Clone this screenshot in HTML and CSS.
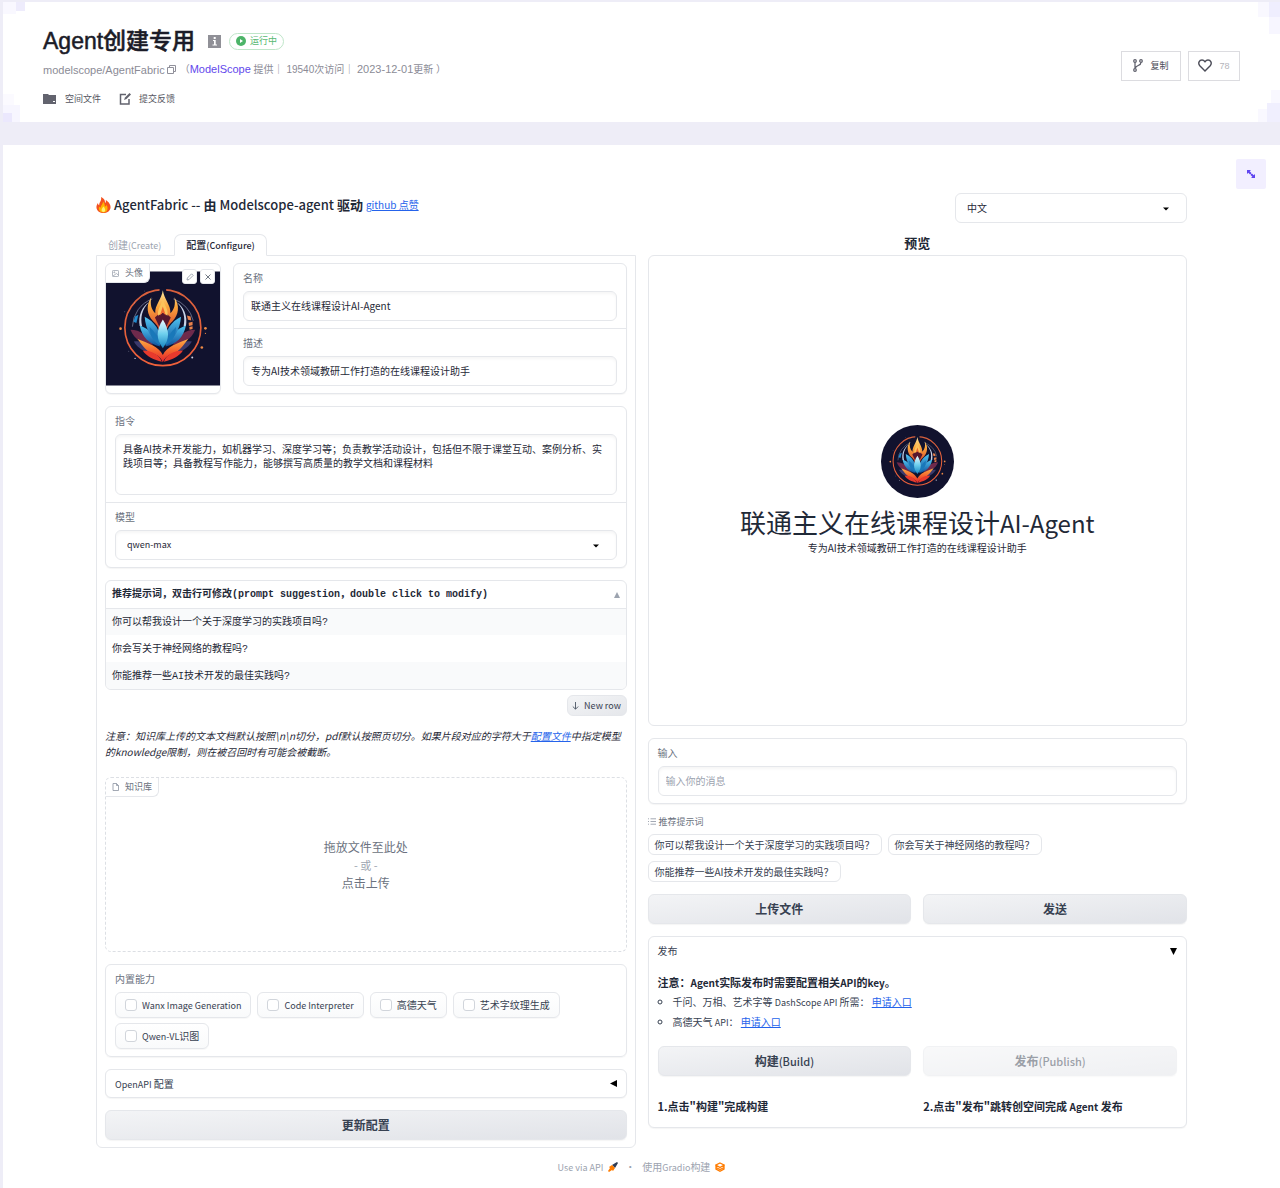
FILE: index.html
```html
<!DOCTYPE html>
<html lang="zh-CN">
<head>
<meta charset="utf-8">
<meta name="viewport" content="width=device-width, initial-scale=1">
<title>Agent创建专用</title>
<link rel="stylesheet" href="styles.css">
</head>
<body>
<svg class="defs" aria-hidden="true">
  <defs>
    <linearGradient id="ring" x1="0" y1="0" x2="0" y2="1"><stop offset="0" stop-color="#d8603c"/><stop offset="1" stop-color="#f0603a"/></linearGradient>
    <linearGradient id="fire" x1="0" y1="0" x2="0" y2="1"><stop offset="0" stop-color="#ffe9a0"/><stop offset=".4" stop-color="#fba63c"/><stop offset="1" stop-color="#d8402c"/></linearGradient>
    <linearGradient id="wing" x1="0" y1="0" x2="0" y2="1"><stop offset="0" stop-color="#fbb045"/><stop offset=".5" stop-color="#f4652e"/><stop offset="1" stop-color="#e3202c"/></linearGradient>
    <linearGradient id="ice" x1="0" y1="0" x2="0" y2="1"><stop offset="0" stop-color="#effaff"/><stop offset=".5" stop-color="#6fd0ee"/><stop offset="1" stop-color="#1583be"/></linearGradient>
    <linearGradient id="blue" x1="0" y1="0" x2="0" y2="1"><stop offset="0" stop-color="#52c5f2"/><stop offset="1" stop-color="#0d4f9a"/></linearGradient>
    <symbol id="emblem" viewBox="-12 27 345 345">
      <rect x="-12" y="27" width="345" height="345" fill="#11122e"/>
      <circle cx="160" cy="197" r="115" fill="none" stroke="url(#ring)" stroke-width="5"/>
      <path d="M150 76h20v12h-20z" fill="#11122e"/>
      <path d="M68 194a92 92 0 0 1 60-84M252 176a92 92 0 0 0-60-66" fill="none" stroke="#8d93ae" stroke-width="2"/>
      <path d="M90 192C84 160 98 132 118 120C96 142 92 166 97 192ZM230 192C236 160 222 132 202 120C224 142 228 166 223 192Z" fill="#c8d2e6"/>
      <path d="M76 163l10-5-6 25-9-4z" fill="#238bcf"/>
      <path d="M233 160l11 3 2 12-10-2zM238 182l12-3v11l-11 2zM240 195l10-2v8l-9 2z" fill="#e8814b"/>
      <path d="M62 203C92 203 116 222 130 249C100 246 74 234 62 203ZM258 203C228 203 204 222 190 249C220 246 246 234 258 203Z" fill="#6e2a4c"/>
      <path d="M72 239C98 234 125 248 138 272C108 274 86 262 72 239ZM248 239C222 234 195 248 182 272C212 274 234 262 248 239Z" fill="#3c3a6c"/>
      <path d="M160 84C164 112 184 128 183 153C195 142 199 126 195 105C212 130 208 158 190 177C179 188 173 195 171 207L160 178L149 207C147 195 141 188 130 177C112 158 108 130 125 105C121 126 125 142 137 153C136 128 156 112 160 84Z" fill="url(#fire)"/>
      <path d="M160 144L184 166L160 216L136 166Z" fill="#58172d"/>
      <path d="M160 106C163 130 178 140 174 161L160 151L146 161C142 140 157 130 160 106Z" fill="#fbc35b"/>
      <path d="M160 133L169 160L160 151L151 160Z" fill="#f0662e"/>
      <path d="M90 190C119 202 143 224 152 254C121 249 96 226 90 190ZM230 190C201 202 177 224 168 254C199 249 224 226 230 190Z" fill="url(#blue)"/>
      <path d="M105 164C134 178 155 206 155 247C126 233 108 204 105 164ZM215 164C186 178 165 206 165 247C194 233 212 204 215 164Z" fill="url(#blue)"/>
      <path d="M120 195C137 211 148 229 153 251C132 242 121 221 120 195ZM200 195C183 211 172 229 167 251C188 242 199 221 200 195Z" fill="#1978b9"/>
      <path d="M160 172C181 206 181 231 160 259C139 231 139 206 160 172Z" fill="url(#ice)"/>
      <path d="M83 231C115 244 148 253 160 280C172 253 205 244 237 231C219 252 211 270 188 276C173 281 165 290 160 302C155 290 147 281 132 276C109 270 101 252 83 231Z" fill="url(#wing)"/>
      <path d="M99 266C127 267 148 277 157 300C133 294 111 285 99 266ZM221 266C193 267 172 277 163 300C187 294 209 285 221 266Z" fill="#e83a2d"/>
      <g fill="#ef8a45"><circle cx="32" cy="200" r="4"/><circle cx="289" cy="199" r="4"/><circle cx="289" cy="214" r="2"/><circle cx="278" cy="257" r="4"/></g>
      <g fill="#cdd1e4"><circle cx="249" cy="287" r="3"/><circle cx="76" cy="290" r="2"/><circle cx="57" cy="268" r="1"/><circle cx="45" cy="149" r="1"/><circle cx="75" cy="122" r="1"/><circle cx="105" cy="86" r="1"/></g>
    </symbol>
  </defs>
</svg>

<header class="space">
  <div class="space-info">
    <div class="space-title">
      <h1>Agent创建专用</h1>
      <svg class="info-icon" width="13" height="13" viewBox="0 0 13 13"><path fill="#909097" d="M0 0h13v13H0z"/><path fill="#fff" d="M5.700 2h2v2h-2zM5 5h2.700v4.500H9v1H4.500v-1h1.500V6H5z"/></svg>
      <span class="status"><svg width="10" height="10" viewBox="0 0 10 10"><circle cx="5" cy="5" r="5" fill="#4cb468"/><path d="M4 3l3 2-3 2z" fill="#fff"/></svg>运行中</span>
    </div>
    <div class="space-meta">
      <span>modelscope/AgentFabric</span>
      <svg class="copy" width="9" height="9" viewBox="0 0 9 9" fill="none" stroke="#90909a"><path d="M.5 2.500h6v6h-6zM2.500 2V.5h6v6H7"/></svg>
      <span class="provider">（<a href="#modelscope">ModelScope</a> 提供｜ 19540次访问｜ <time>2023-12-01</time>更新 ）</span>
    </div>
    <nav class="space-links">
      <a href="#files"><svg width="14" height="10" viewBox="0 0 14 10"><path fill="#62636e" d="M0 0h5l1 1h7v9H0z"/><path fill="#fff" d="M10 7h2v1h-2z"/></svg>空间文件</a>
      <a href="#feedback"><svg width="12" height="12" viewBox="0 0 12 12" fill="none" stroke="#62636e" stroke-width="1.500"><path d="M7 1.500H1.500V11H10V6"/><path d="M5 7l1-2.500L10.500 0 12 1.500 7.500 6z" fill="#62636e" stroke="none"/></svg>提交反馈</a>
    </nav>
  </div>
  <div class="space-actions">
    <button type="button" class="outline"><svg width="10" height="13" viewBox="0 0 10 13" fill="none" stroke="#5b5c68" stroke-width="1.200"><circle cx="2" cy="2" r="1.300"/><circle cx="8" cy="2" r="1.300"/><circle cx="2" cy="11" r="1.300"/><path d="M2 3.500v6M8 3.500C8 7 3 6 2.500 9"/></svg>复制</button>
    <button type="button" class="outline like" aria-label="喜欢 78"><svg width="14" height="13" viewBox="0 0 14 13" fill="none" stroke="#4b4c57" stroke-width="1.400"><path d="M7 12L1.800 6.800C-.5 4 1.500 1 4 1c1.500 0 2.300.8 3 1.700C7.700 1.800 8.500 1 10 1c2.500 0 4.500 3 2.200 5.800z"/></svg>78</button>
  </div>
</header>

<main class="app">
  <button type="button" class="expand" aria-label="全屏"><svg width="10" height="10" viewBox="0 0 10 10" fill="#5f45f0"><path d="M1 1h4L3.700 2.300l4 4L9 5v4H5l1.300-1.300-4-4L1 5z"/><path d="M4.200 5.800l1.600-1.600" stroke="#f2efff" stroke-width=".8"/></svg></button>

  <div class="top-row">
    <h2><svg width="15" height="16" viewBox="0 0 15 16"><path fill="#f4511e" d="M5 0c4 2 4 4 4 6 1-.5 1-2 .7-3C13 5 15 8 14.500 11c-.5 3-3.500 5-7 5s-6.500-2-7-5C.2 9 1 7 2 6c0 1.200.5 2 1.200 2.300C3 5 6 4 5 0z"/><path fill="#ffb300" d="M7 4.500c2.500 2.500 1 4 2.500 5 .7-.5.800-1 .8-1.800 2.200 2.500 1.700 7.800-2.800 7.800-4 0-5.500-3.500-4.300-6 .5 1 1 1.200 1.600 1C4.800 8 7 7.500 7 4.500z"/><path fill="#fff176" d="M7.500 9.500c2 2 2.500 5.500 0 5.500s-2.500-3 0-5.500z"/></svg> <span class="brand"><span class="en">AgentFabric --</span> 由 <span class="en">Modelscope-agent</span> 驱动</span> <a href="#github">github 点赞</a></h2>
    <div class="select-wrap language">
      <select aria-label="语言"><option>中文</option></select>
      <svg class="caret" width="6" height="4" viewBox="0 0 6 4"><path d="M0 .5h6L3 3.500z"/></svg>
    </div>
  </div>

  <div class="columns">
    <section class="left">
      <div class="tabs" role="tablist">
        <button type="button" role="tab" class="tab" aria-selected="false">创建<span class="en">(Create)</span></button>
        <button type="button" role="tab" class="tab active" aria-selected="true">配置<span class="en">(Configure)</span></button>
      </div>
      <div class="panel">
        <div class="profile">
          <div class="box avatar">
            <svg class="avatar-img"><use href="#emblem"/></svg>
            <span class="block-label"><svg width="7" height="7" viewBox="0 0 8 8" fill="none" stroke="#8b93a1" stroke-width=".8"><rect x=".5" y=".5" width="7" height="7" rx="1"/><circle cx="2.600" cy="2.600" r=".6"/><path d="M1 7l4-3 2.500 2"/></svg>头像</span>
            <div class="avatar-tools">
              <button type="button" aria-label="编辑"><svg width="8" height="8" viewBox="0 0 8 8" fill="none" stroke="#8b93a1" stroke-width=".8"><path d="M1 7l.4-2L5.600.8l1.600 1.600L3 6.600z"/></svg></button>
              <button type="button" aria-label="清除"><svg width="6" height="6" viewBox="0 0 6 6" stroke="#4b5563" stroke-width=".8"><path d="M.5.5l5 5M5.500.5l-5 5"/></svg></button>
            </div>
          </div>
          <div class="box form">
            <label class="field"><span>名称</span><input type="text" value="联通主义在线课程设计AI-Agent"></label>
            <label class="field"><span>描述</span><input type="text" value="专为AI技术领域教研工作打造的在线课程设计助手"></label>
          </div>
        </div>

        <div class="box form">
          <label class="field"><span>指令</span><textarea>具备AI技术开发能力，如机器学习、深度学习等；负责教学活动设计，包括但不限于课堂互动、案例分析、实践项目等；具备教程写作能力，能够撰写高质量的教学文档和课程材料</textarea></label>
          <div class="field"><label for="model">模型</label>
            <div class="select-wrap">
              <select id="model" class="model"><option>qwen-max</option></select>
              <svg class="caret" width="6" height="4" viewBox="0 0 6 4"><path d="M0 .5h6L3 3.500z"/></svg>
            </div>
          </div>
        </div>

        <div class="suggestions">
          <div class="table-wrap">
            <table>
              <thead><tr><th><div>推荐提示词，双击行可修改(prompt suggestion，double click to modify)<svg width="6" height="6" viewBox="0 0 6 6"><path d="M3 0l3 6H0z" fill="#9ca3af"/></svg></div></th></tr></thead>
              <tbody>
                <tr><td>你可以帮我设计一个关于深度学习的实践项目吗?</td></tr>
                <tr><td>你会写关于神经网络的教程吗?</td></tr>
                <tr><td>你能推荐一些AI技术开发的最佳实践吗?</td></tr>
              </tbody>
            </table>
          </div>
          <button type="button" class="new-row"><svg width="7" height="8" viewBox="0 0 7 8" fill="none" stroke="#4b5563" stroke-width=".9"><path d="M3.500 0v7M.8 4.500l2.700 2.700 2.700-2.700"/></svg>New row</button>
        </div>

        <p class="note">注意：知识库上传的文本文档默认按照\n\n切分，pdf默认按照页切分。如果片段对应的字符大于<a href="#config">配置文件</a>中指定模型的knowledge限制，则在被召回时有可能会被截断。</p>

        <div class="upload">
          <span class="block-label"><svg width="7" height="8" viewBox="0 0 7 8" fill="none" stroke="#8b93a1" stroke-width=".8"><path d="M4.500.5H1v7h5.500v-5zM4.500.5v2h2"/></svg>知识库</span>
          <button type="button">拖放文件至此处<span>- 或 -</span>点击上传</button>
        </div>

        <fieldset class="box abilities">
          <legend>内置能力</legend>
          <div class="checks">
            <label><input type="checkbox"><span class="en">Wanx Image Generation</span></label>
            <label><input type="checkbox"><span class="en">Code Interpreter</span></label>
            <label><input type="checkbox">高德天气</label>
            <label><input type="checkbox">艺术字纹理生成</label>
            <label><input type="checkbox"><span><span class="en">Qwen-VL</span>识图</span></label>
          </div>
        </fieldset>

        <button type="button" class="box accordion" aria-expanded="false"><span><span class="en">OpenAPI</span> 配置</span><svg width="7" height="7" viewBox="0 0 7 7"><path d="M7 0v7L0 3.500z"/></svg></button>
        <button type="button" class="primary">更新配置</button>
      </div>
    </section>

    <section class="right">
      <h3 class="preview-title">预览</h3>
      <div class="stack">
        <div class="box chat">
          <svg class="portrait"><use href="#emblem"/></svg>
          <h1>联通主义在线课程设计<span class="en">AI-Agent</span></h1>
          <p>专为AI技术领域教研工作打造的在线课程设计助手</p>
        </div>
        <div class="box form">
          <label class="field"><span>输入</span><input type="text" placeholder="输入你的消息"></label>
        </div>
        <div class="examples">
          <div class="examples-label"><svg width="8" height="7" viewBox="0 0 8 7" stroke="#8b93a1" stroke-width=".8"><path d="M0 .8h1M2.500.8H8M0 3.500h1M2.500 3.500H8M0 6.200h1M2.500 6.200H8"/></svg>推荐提示词</div>
          <div class="example-list">
            <button type="button">你可以帮我设计一个关于深度学习的实践项目吗？</button>
            <button type="button">你会写关于神经网络的教程吗？</button>
            <button type="button">你能推荐一些AI技术开发的最佳实践吗？</button>
          </div>
        </div>
        <div class="pair">
          <button type="button" class="primary">上传文件</button>
          <button type="button" class="primary">发送</button>
        </div>
        <div class="box publish">
          <button type="button" class="publish-head" aria-expanded="true">发布<svg width="7" height="7" viewBox="0 0 7 7"><path d="M0 0h7L3.500 7z"/></svg></button>
          <h4>注意：<span class="en">Agent</span>实际发布时需要配置相关<span class="en">API</span>的<span class="en">key</span>。</h4>
          <ul>
            <li>千问、万相、艺术字等 <span class="en">DashScope API</span> 所需： <a href="#dashscope">申请入口</a></li>
            <li>高德天气 <span class="en">API</span>： <a href="#amap">申请入口</a></li>
          </ul>
          <div class="pair">
            <button type="button" class="primary">构建<span class="en">(Build)</span></button>
            <button type="button" class="primary" disabled>发布<span class="en">(Publish)</span></button>
          </div>
          <div class="pair steps">
            <h4>1.点击"构建"完成构建</h4>
            <h4>2.点击"发布"跳转创空间完成 <span class="en">Agent</span> 发布</h4>
          </div>
        </div>
      </div>
    </section>
  </div>

  <footer>
    <a href="#api"><span class="en">Use via API</span><svg width="10" height="10" viewBox="0 0 10 10"><path d="M4 3l5-3 1 1-3 5z" fill="#2f3d57"/><path d="M1 5l3-2 3 3-2 3-1-1-3 2-1-1 2-3z" fill="#ff7c00"/></svg></a>
    <span>·</span>
    <a href="#gradio"><span>使用<span class="en">Gradio</span>构建</span><svg width="10" height="10" viewBox="0 0 10 10" fill="none" stroke="#ff7c00" stroke-width="1.300"><path d="M5 1l4 2-4 2.500L1 3zM1 3v4l4 2.200L9 7V3M1 5.500l4 2 4-2"/></svg></a>
  </footer>
</main>
</body>
</html>
```

FILE: styles.css
```css
* { box-sizing: border-box; }

body {
  margin: 0;
  padding: 2px 0 0 3px;
  background: #eeedf7;
  color: #1f2937;
  font: 10px/14px "Noto Sans CJK SC", sans-serif;
}

h1, h2, h3, h4, p, ul { margin: 0; padding: 0; }
button, input, select, textarea { font: inherit; color: inherit; margin: 0; }
button { cursor: pointer; padding: 0; border: 0; background: none; }
svg { display: block; flex: none; }
a { color: #2563eb; }
.defs { position: absolute; width: 0; height: 0; }

/* Latin runs sit one size below the Chinese text around them */
.en { font-size: 9px; line-height: 1; }

/* Space header */
.space {
  display: flex;
  justify-content: space-between;
  align-items: center;
  padding: 23px 40px 16px;
  font-family: "Liberation Sans", "Noto Sans CJK SC", sans-serif;
  background:
    linear-gradient(#eeecfc, #eeecfc) 13px 0 / 9px 9px no-repeat,
    linear-gradient(#f9f8ff, #f9f8ff) 0 0 / 13px 12px no-repeat,
    linear-gradient(#ebe8fd, #ebe8fd) 0 100% / 9px 9px no-repeat,
    linear-gradient(#f7f6ff, #f7f6ff) 0 100% / 17px 17px no-repeat,
    linear-gradient(#fbfaff, #fbfaff) 0 100% / 11px 28px no-repeat,
    linear-gradient(#efeefe, #efeefe) 100% 0 / 11px 15px no-repeat,
    linear-gradient(#f9f8ff, #f9f8ff) 100% 0 / 22px 15px no-repeat,
    linear-gradient(#f7f6ff, #f7f6ff) 100% 0 / 11px 32px no-repeat,
    linear-gradient(#f0effe, #f0effe) 100% 100% / 13px 19px no-repeat,
    linear-gradient(#f9f8ff, #f9f8ff) 100% 100% / 22px 13px no-repeat,
    linear-gradient(#f9f8ff, #f9f8ff) 100% 100% / 9px 32px no-repeat,
    #fff;
}
.space-title { display: flex; align-items: center; height: 32px; }
.space-title h1 { font-size: 23px; line-height: 32px; font-weight: 500; color: #1b1c28; -webkit-text-stroke: 0.5px #1b1c28; }
.info-icon { margin: 0 8px 0 13px; }
.status {
  display: flex;
  align-items: center;
  gap: 4px;
  height: 17px;
  padding: 0 6px;
  border: 1px solid #bfe6c9;
  border-radius: 9px;
  color: #58b871;
  font-size: 9px;
}
.space-meta { display: flex; align-items: center; margin-top: 4px; font-size: 11px; line-height: 16px; color: #8b8b96; }
.space-meta .copy { margin: 0 4px 0 2px; }
.space-meta a, .space-meta time { font-size: 11px; }
.space-meta a { color: #6248ec; text-decoration: none; }
.provider { font-size: 10px; }
.space-links { display: flex; gap: 18px; margin-top: 14px; }
.space-links a { display: flex; align-items: center; gap: 8px; font-size: 9px; line-height: 14px; color: #55565f; text-decoration: none; }
.space-actions { display: flex; gap: 7px; }
.outline {
  display: flex;
  align-items: center;
  justify-content: center;
  gap: 7px;
  width: 60px;
  height: 30px;
  border: 1px solid #dcdce0;
  background: #fff;
  font-size: 9px;
  color: #4b4c57;
}
.like { width: 52px; color: #b4b4ba; }

/* App shell */
.app { position: relative; margin-top: 23px; padding: 48px 93px 15px; background: #fff; }
.expand {
  position: absolute;
  top: 14px;
  right: 14px;
  display: flex;
  align-items: center;
  justify-content: center;
  width: 30px;
  height: 30px;
  border-radius: 2px;
  background: #f2efff;
}
.top-row { display: flex; justify-content: space-between; height: 41px; }
.top-row h2 { display: flex; align-items: center; gap: 3px; height: 24px; font-size: 13px; font-weight: 700; }
.top-row .en { font-size: 13px; font-weight: 500; }
.top-row h2 a { font-size: 10px; font-weight: 400; }
.columns { display: grid; grid-template-columns: 1fr 1fr; gap: 12px; align-items: start; }

/* Tabs */
.tabs { display: flex; height: 21px; }
.tab { height: 21px; padding: 0 12px; border: 1px solid transparent; color: #9ca3af; }
.tab:first-child { padding-left: 11px; }
.tab.active {
  position: relative;
  height: 22px;
  padding: 0 11px;
  border-color: #e5e7eb;
  border-bottom-color: #fff;
  border-radius: 7px 7px 0 0;
  background: #fff;
  color: #1f2937;
  font-weight: 500;
}
.panel {
  display: flex;
  flex-direction: column;
  gap: 12px;
  padding: 7px 8px;
  border: 1px solid #e5e7eb;
  border-radius: 0 0 6px 6px;
}

/* Boxes and fields */
.box { border: 1px solid #e5e7eb; border-radius: 6px; background: #fff; box-shadow: 0 1px 1px #0000000a; }
.form { overflow: hidden; }
.field { display: block; padding: 7px 9px; color: #6b7280; }
.field + .field { border-top: 1px solid #e5e7eb; }
.field > span, .field > label { display: block; margin-bottom: 6px; line-height: 14px; }
.field input, .field textarea, select {
  display: block;
  width: 100%;
  height: 30px;
  padding: 0 7px;
  border: 1px solid #e5e7eb;
  border-radius: 6px;
  background: #fff;
  color: #1f2937;
  box-shadow: inset 0 2px 3px #0000000a;
}
.field input { padding-bottom: 2px; }
.field textarea { height: 61px; padding: 7px; line-height: 14px; resize: none; }
.field input::placeholder { color: #9ca3af; }
select { appearance: none; padding: 0 11px; }
select.model { font-size: 9px; }
.select-wrap { position: relative; }
.caret { position: absolute; right: 18px; top: 14px; pointer-events: none; }
.language { width: 232px; }
.language select { box-shadow: none; }

.profile { display: grid; grid-template-columns: 116px 1fr; gap: 12px; }
.avatar { position: relative; padding-top: 7px; overflow: hidden; }
.avatar-img { width: 100%; height: 115px; }
.block-label {
  position: absolute;
  top: 0;
  left: 0;
  display: flex;
  align-items: center;
  gap: 6px;
  height: 19px;
  padding: 0 6px;
  border: 1px solid #e5e7eb;
  border-width: 0 1px 1px 0;
  border-radius: 6px 0;
  background: #fff;
  color: #6b7280;
  font-size: 9px;
}
.avatar-tools { position: absolute; top: 5px; right: 5px; display: flex; gap: 3px; }
.avatar-tools button {
  display: flex;
  align-items: center;
  justify-content: center;
  width: 15px;
  height: 15px;
  border: 1px solid #e5e7eb;
  border-radius: 3px;
  background: #fff;
}

/* Prompt table */
.suggestions { display: flex; flex-direction: column; align-items: flex-end; gap: 5px; }
.table-wrap { width: 100%; border: 1px solid #e5e7eb; border-radius: 6px; overflow: hidden; font-family: "Liberation Mono", "Noto Sans CJK SC", monospace; }
table { width: 100%; border-collapse: collapse; }
th, td { height: 27px; padding: 2px 6px 0; text-align: left; line-height: 14px; }
th { border-bottom: 1px solid #e5e7eb; font-weight: 700; }
th div { display: flex; justify-content: space-between; align-items: center; }
tbody tr:nth-child(odd) { background: #f9fafb; }
.new-row {
  display: flex;
  align-items: center;
  justify-content: center;
  gap: 5px;
  width: 60px;
  height: 21px;
  border: 1px solid #e5e7eb;
  border-radius: 6px;
  background: linear-gradient(to bottom right, #f3f4f6, #e5e7eb);
  color: #374151;
  font-size: 9px;
}
.note { padding-bottom: 5px; font-style: italic; line-height: 16px; }

.upload { position: relative; height: 175px; border: 1px dashed #dcdfe4; border-radius: 6px; }
.upload button { display: flex; flex-direction: column; align-items: center; justify-content: center; width: 100%; height: 100%; font-size: 12px; line-height: 18px; color: #6b7280; }
.upload button span { color: #9ca3af; font-size: 11px; }

.abilities { margin: 0; padding: 7px 9px; min-width: 0; }
.abilities legend { float: left; width: 100%; margin-bottom: 6px; padding: 0; color: #6b7280; }
.checks { clear: both; display: flex; flex-wrap: wrap; gap: 5px 6px; }
.checks label {
  display: flex;
  align-items: center;
  gap: 5px;
  height: 26px;
  padding: 0 9px;
  border: 1px solid #e5e7eb;
  border-radius: 6px;
  background: linear-gradient(#fff, #f9fafb);
  color: #374151;
  box-shadow: 0 1px 1px #00000008;
}
.checks input { appearance: none; width: 12px; height: 12px; border: 1px solid #d1d5db; border-radius: 3px; background: #fff; }
.accordion { display: flex; justify-content: space-between; align-items: center; height: 29px; padding: 0 9px; color: #374151; }
.primary {
  height: 30px;
  border: 1px solid #e5e7eb;
  border-radius: 6px;
  background: linear-gradient(to bottom right, #f3f4f6, #e1e3e8);
  box-shadow: 0 1px 1px #0000000a;
  color: #374151;
  font-size: 12px;
  font-weight: 600;
}
.primary .en { font-size: 11px; font-weight: 500; }
.primary:disabled { opacity: 0.5; }

/* Preview column */
.preview-title { height: 21px; line-height: 18px; font-size: 13px; font-weight: 600; text-align: center; }
.stack { display: flex; flex-direction: column; gap: 12px; }
.chat { display: flex; flex-direction: column; align-items: center; height: 471px; padding-top: 169px; box-shadow: none; }
.portrait { width: 73px; height: 73px; border-radius: 50%; }
.chat h1 { margin-top: 5px; font-size: 26px; line-height: 38px; font-weight: 400; }
.chat .en { font-size: 24px; }
.examples-label { display: flex; align-items: center; gap: 3px; height: 11px; margin-bottom: 7px; font-size: 9px; color: #6b7280; }
.example-list { display: flex; flex-wrap: wrap; gap: 6px; }
.example-list button { height: 21px; padding: 0 6px; border: 1px solid #e5e7eb; border-radius: 6px; color: #374151; }
.pair { display: grid; grid-template-columns: 1fr 1fr; gap: 12px; }

.publish { padding: 0 9px 14px; }
.publish-head { display: flex; justify-content: space-between; align-items: center; width: 100%; height: 28px; color: #374151; }
.publish h4 { font-size: 11px; line-height: 14px; font-weight: 600; }
.publish h4 .en { font-size: 10px; }
.publish > h4 { margin-top: 10px; }
.publish ul { margin: 3px 0 14px; padding-left: 15px; list-style: circle; }
.publish li { line-height: 20px; color: #374151; }
.publish .steps { margin-top: 23px; }

footer { display: flex; justify-content: center; gap: 7px; margin-top: 12px; color: #9ca3af; }
footer a { display: flex; align-items: center; gap: 5px; color: inherit; text-decoration: none; }
```
